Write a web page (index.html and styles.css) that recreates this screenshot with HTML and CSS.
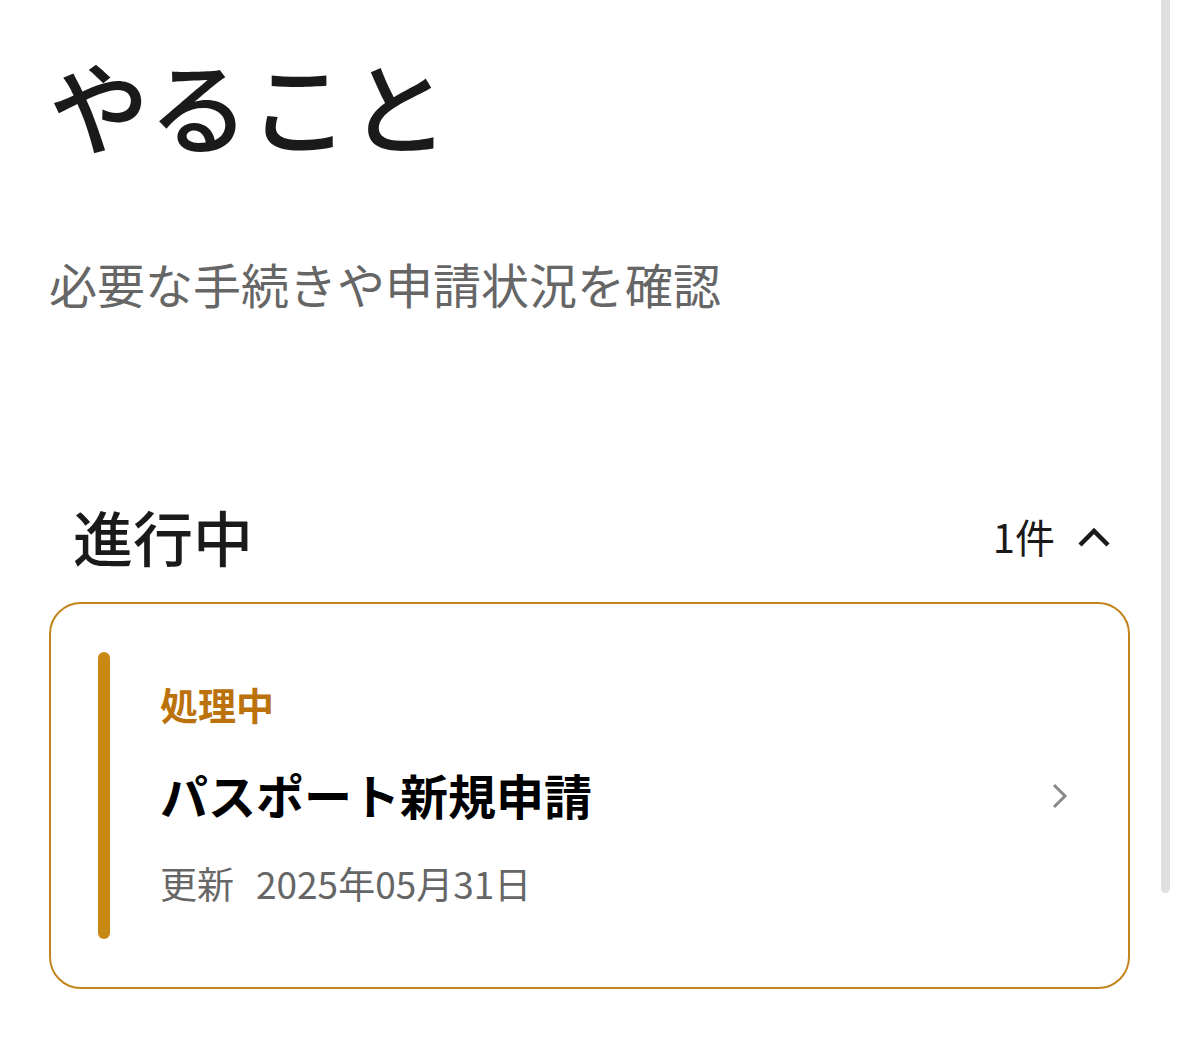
FILE: index.html
```html
<!DOCTYPE html>
<html lang="ja">
<head>
<meta charset="utf-8">
<link rel="stylesheet" href="styles.css">
</head>
<body>
<main class="page">
  <h1 class="title">やること</h1>
  <p class="subtitle">必要な手続きや申請状況を確認</p>

  <section class="section">
    <div class="section-head">
      <h2 class="section-title">進行中</h2>
      <div class="section-meta">
        <span class="count">1件</span>
        <svg class="chev-up" width="34" height="24" viewBox="0 0 34 24"><path d="M3 21 L17 7 L31 21" fill="none" stroke="#1a1a1a" stroke-width="4.5"/></svg>
      </div>
    </div>

    <a class="card" href="#">
      <span class="card-bar"></span>
      <div class="card-body">
        <div class="status">処理中</div>
        <div class="card-title">パスポート新規申請</div>
        <div class="card-date"><span class="date-label">更新</span>2025年05月31日</div>
      </div>
      <svg class="chev-right" width="20" height="28" viewBox="0 0 20 28"><path d="M4 3 L15 14 L4 25" fill="none" stroke="#8a8a8a" stroke-width="3"/></svg>
    </a>
  </section>
</main>
<div class="scroll-thumb"></div>
</body>
</html>
```

FILE: styles.css
```css
html, body {
  margin: 0;
  padding: 0;
  background: #ffffff;
}
body {
  font-family: "Noto Sans CJK JP", "Noto Sans", sans-serif;
  color: #1a1a1a;
}
.page {
  padding: 54px 49px 0 49px;
}
.title {
  margin: 0;
  font-size: 100px;
  font-weight: 500;
  line-height: 1;
  letter-spacing: 0;
}
.subtitle {
  margin: 105px 0 0 0;
  font-size: 48px;
  line-height: 1;
  color: #666666;
}
.section {
  margin-top: 199px;
}
.section-head {
  display: flex;
  align-items: center;
  justify-content: space-between;
  padding: 0 19px 0 24px;
}
.section-title {
  margin: 0;
  font-size: 60px;
  font-weight: 500;
  line-height: 1;
}
.section-meta {
  display: flex;
  align-items: center;
  gap: 22px;
}
.count {
  font-size: 40px;
  line-height: 1;
  margin-left: 2px;
}
.chev-up {
  display: block;
}
.card {
  display: flex;
  align-items: stretch;
  margin-top: 36px;
  border: 2px solid #c4841c;
  border-radius: 32px;
  padding: 48px 58px 48px 47px;
  text-decoration: none;
  color: inherit;
}
.card-bar {
  width: 12px;
  border-radius: 6px;
  background: #c98812;
  flex: none;
}
.card-body {
  flex: 1;
  display: flex;
  flex-direction: column;
  justify-content: center;
  gap: 47px;
  padding: 0 0 4px 50px;
  min-height: 283px;
}
.status {
  font-size: 38px;
  font-weight: 700;
  line-height: 1;
  color: #bb720c;
}
.card-title {
  font-size: 48px;
  font-weight: 700;
  line-height: 1;
  color: #000000;
}
.card-date {
  font-size: 37px;
  line-height: 1;
  color: #666666;
}
.date-label {
  margin-right: 22px;
}
.chev-right {
  align-self: center;
  display: block;
}
.scroll-thumb {
  position: fixed;
  top: 0;
  right: 9px;
  width: 9px;
  height: 893px;
  background: #e0e0e0;
  border-radius: 0 0 5px 5px;
}
```
